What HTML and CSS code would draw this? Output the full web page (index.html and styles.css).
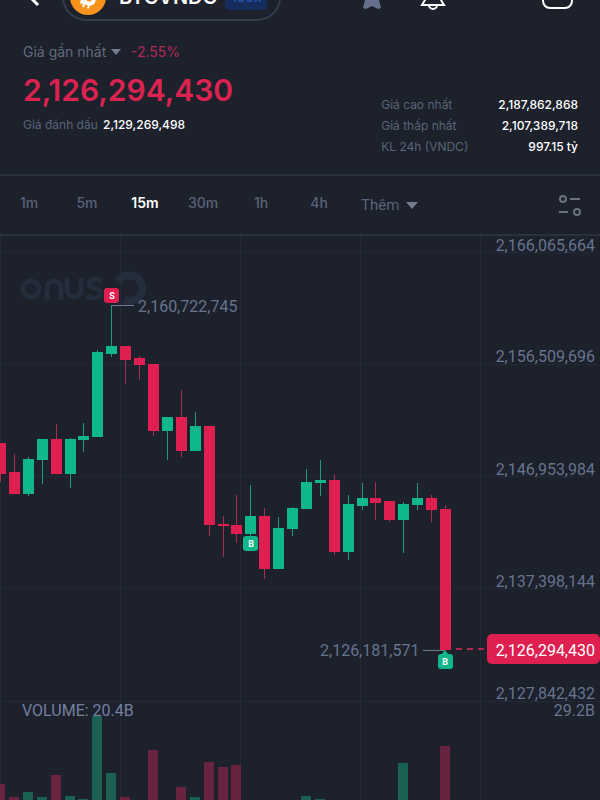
FILE: index.html
```html
<!DOCTYPE html>
<html lang="vi">

<head>
    <meta charset="UTF-8">
    <meta name="viewport" content="width=device-width, initial-scale=1.0">
    <title>BTCVNDC</title>
    <link rel="stylesheet" href="styles.css">
</head>

<body>
    <header class="topbar">
        <button class="icon-btn back" aria-label="Back">
            <svg width="24" height="24" viewBox="0 0 24 24"><path d="M14 0 L4 10 L14 20" fill="none" stroke="#fff" stroke-width="3"/></svg>
        </button>
        <button class="pair">
            <svg width="36" height="36" viewBox="0 0 36 36">
                <circle cx="18" cy="18" r="18" fill="#f7931a"/>
                <g transform="rotate(14 18 17)" fill="none" stroke="#fff" stroke-width="4">
                    <path d="M12 10 H20 a3 3 0 0 1 0 7 H16 M21 17 a3 3 0 0 1 0 7 H12 M16 10 V24"/>
                    <path d="M16 5 V9 M21 5 V9 M16 25 V29 M21 25 V29" stroke-width="2"/>
                </g>
            </svg>
            <span class="pair-name">BTCVNDC</span>
            <span class="leverage">100x</span>
        </button>
        <div class="actions">
            <button class="icon-btn" aria-label="Favourite">
                <svg width="20" height="24" viewBox="0 0 20 24"><path d="M2 2 H18 V14 L20 22 L17 23 L11 20 L5 23 L2 22 L4 14 Z" fill="#64708a"/></svg>
            </button>
            <button class="icon-btn" aria-label="Alerts">
                <svg width="28" height="28" viewBox="0 0 28 28" fill="none" stroke="#fff" stroke-width="2"><path d="M4 23 L7 18 V10 a8 8 0 0 1 16 0 V18 L26 23 Z"/><path d="M11 23 a4 4 0 0 0 8 0"/></svg>
            </button>
            <button class="icon-btn layout" aria-label="Layout">
                <svg width="32" height="32" viewBox="0 0 32 32"><rect x="1" y="2" width="29" height="28" rx="7" fill="none" stroke="#fff" stroke-width="2"/></svg>
            </button>
        </div>
    </header>

    <section class="summary">
        <div class="price-block">
            <div class="price-type">
                <select id="price-type" aria-label="Loại giá">
                    <option>Giá gần nhất</option>
                </select>
                <svg class="caret" width="10" height="6" viewBox="0 0 10 6"><path d="M0 0 H10 L5 6 Z"/></svg>
                <span class="change">-2.55%</span>
            </div>
            <div class="price">2,126,294,430</div>
            <div class="mark"><span class="label">Giá đánh dấu</span> <span>2,129,269,498</span></div>
        </div>
        <dl class="stats">
            <dt>Giá cao nhất</dt>
            <dd>2,187,862,868</dd>
            <dt>Giá thấp nhất</dt>
            <dd>2,107,389,718</dd>
            <dt>KL 24h (VNDC)</dt>
            <dd>997.15 tỷ</dd>
        </dl>
    </section>

    <nav class="intervals">
        <button>1m</button>
        <button>5m</button>
        <button class="active">15m</button>
        <button>30m</button>
        <button>1h</button>
        <button>4h</button>
        <div class="more">
            <select id="more" aria-label="Khung thời gian">
                <option>Thêm</option>
            </select>
            <svg class="caret" width="12" height="7" viewBox="0 0 12 7"><path d="M0 0 H12 L6 7 Z"/></svg>
        </div>
        <button class="settings" aria-label="Settings">
            <svg width="24" height="22" viewBox="0 0 24 22" fill="none" stroke="#6b7180" stroke-width="2">
                <circle cx="5" cy="5" r="3"/><path d="M12 5 H22 M1 18 H10"/><circle cx="19" cy="18" r="3"/>
            </svg>
        </button>
    </nav>

    <main>
        <svg class="chart" viewBox="0 236 600 564">
            <path class="grid" d="M0 252.5H600 M0 364.5H600 M0 476.5H600 M0 588.5H600 M0 701.5H600 M.5 236V800 M120.5 236V800 M240.5 236V800 M360.5 236V800 M480.5 236V800"/>
            <g class="watermark">
                <g fill="none" stroke-width="5">
                    <circle cx="31" cy="289" r="8"/>
                    <path d="M47 300 V288 a7 7 0 0 1 14 0 V300 M67 278 V290 a7 7 0 0 0 14 0 V278"/>
                    <path d="M102 281 C96 278 89 279 89 284 C89 290 101 287 101 293 C101 299 92 299 87 296"/>
                    <path d="M118 281 C124 273 137 273 141 283 C146 295 135 304 124 300" stroke-width="8"/>
                </g>
            </g>
            <g id="volumes"></g>
            <g id="candles"></g>
            <path class="pointer" d="M112 305.5 H134 M423 650.5 H445"/>
            <path class="last-line" d="M456 649 H486"/>
            <g class="axis-text">
                <text x="138" y="312">2,160,722,745</text>
                <text x="320" y="656">2,126,181,571</text>
                <text x="22" y="716" class="volume">VOLUME: 20.4B</text>
                <g text-anchor="end">
                    <text x="595" y="251">2,166,065,664</text>
                    <text x="595" y="362">2,156,509,696</text>
                    <text x="595" y="475">2,146,953,984</text>
                    <text x="595" y="587">2,137,398,144</text>
                    <text x="595" y="699">2,127,842,432</text>
                    <text x="595" y="716">29.2B</text>
                </g>
            </g>
            <rect class="down" x="487" y="634" width="113" height="30" rx="5"/>
            <text class="last-price" x="595" y="656" text-anchor="end">2,126,294,430</text>
            <g class="trade">
                <rect class="down" x="104" y="288" width="15" height="15" rx="3"/>
                <text x="112" y="299">S</text>
                <rect class="up" x="243" y="536" width="15" height="15" rx="3"/>
                <text x="251" y="547">B</text>
                <path class="up" d="M441 655 L445 650 L449 655 Z"/>
                <rect class="up" x="438" y="654" width="15" height="15" rx="3"/>
                <text x="445" y="665">B</text>
            </g>
        </svg>
    </main>

    <script src="chart.js"></script>
</body>

</html>
```
FILE: styles.css
```css
* {
    margin: 0;
    padding: 0;
    box-sizing: border-box;
}

body {
    background: #1c212c;
    color: #fff;
    font-family: Inter, sans-serif;
    font-size: 12px;
}

button,
select {
    background: none;
    border: none;
    color: inherit;
    font: inherit;
    cursor: pointer;
}

select {
    appearance: none;
}

svg {
    display: block;
}

/* the bar is scrolled partly under the top edge */
.topbar {
    display: flex;
    align-items: flex-end;
    height: 21px;
    padding: 0 24px;
    overflow: hidden;
}

.back {
    width: 38px;
    padding-bottom: 12px;
}

.pair {
    display: flex;
    align-items: center;
    gap: 13px;
    height: 48px;
    padding: 0 12px 0 6px;
    border: 2px solid #333a4b;
    border-radius: 24px;
}

.pair-name {
    font-size: 20px;
    font-weight: 600;
}

.leverage {
    margin-left: -5px;
    padding: 4px 6px;
    border-radius: 4px;
    background: #152c5c;
    color: #2352a4;
    font-size: 13px;
    line-height: 18px;
    font-weight: 600;
}

.actions {
    display: flex;
    align-items: flex-end;
    margin-left: auto;
    padding-bottom: 11px;
}

.actions .icon-btn {
    margin-right: 37px;
}

.actions .layout {
    margin: 0 2px 0 59px;
}

.summary {
    display: flex;
    justify-content: space-between;
    align-items: flex-end;
    height: 155px;
    padding: 0 22px 17px 23px;
    border-bottom: 2px solid #282e3c;
}

.price-block {
    padding-bottom: 24px;
}

.price-type {
    display: flex;
    align-items: center;
    color: #626a7b;
    font-size: 14px;
    line-height: 20px;
}

.caret {
    margin-left: 4px;
    fill: #747c8d;
}

.change {
    margin-left: 10px;
    color: #b32a58;
}

.price {
    margin: 8px 0 7px;
    color: #dc2350;
    font-size: 30px;
    line-height: 40px;
    font-weight: 600;
}

.mark {
    line-height: 16px;
    font-weight: 500;
}

.mark .label {
    margin-right: 2px;
    color: #596478;
    font-weight: 400;
}

.stats {
    display: grid;
    grid-template-columns: auto auto;
    column-gap: 30px;
    line-height: 21px;
}

.stats dt {
    color: #596478;
}

.stats dd {
    text-align: right;
    font-weight: 500;
}

.intervals {
    display: flex;
    align-items: center;
    height: 60px;
    padding-right: 18px;
    border-bottom: 2px solid #2a303e;
    color: #596377;
    font-size: 14px;
    font-weight: 500;
}

.intervals button {
    width: 58px;
    padding-bottom: 6px;
}

.intervals .active {
    color: #fff;
    font-weight: 600;
}

.more {
    display: flex;
    align-items: center;
    margin-left: 13px;
    font-family: Roboto, sans-serif;
    font-size: 15px;
    font-weight: 400;
}

.more .caret {
    margin-left: 6px;
}

.intervals .settings {
    width: auto;
    margin-left: auto;
    padding: 0;
}

.chart {
    width: 100%;
    height: auto;
    font-family: Roboto, sans-serif;
}

.grid {
    stroke: #232936;
}

.watermark {
    stroke: #232d3b;
}

.up {
    fill: #10b78a;
}

.down {
    fill: #df1f50;
}

.wick-up {
    stroke: #21997c;
}

.wick-down {
    stroke: #a92a53;
}

.volume-up {
    fill: #1a6153;
}

.volume-down {
    fill: #67233f;
}

.pointer {
    stroke: #6c7a91;
}

.last-line {
    stroke: #b32650;
    stroke-width: 2;
    stroke-dasharray: 6 5;
}

.axis-text {
    fill: #66748d;
    font-size: 16px;
}

.axis-text .volume {
    fill: #7380a0;
}

.last-price {
    fill: #fff;
    font-size: 16px;
}

.trade text {
    fill: #fff;
    font-size: 9px;
    font-weight: 700;
    text-anchor: middle;
}
```
FILE: chart.js
```javascript
// direction, high, body top, body bottom, low, volume top
const candles = [
    ['down', 443, 443, 474, 482, 784],
    ['down', 454, 472, 494, 494, 797],
    ['up', 457, 459, 494, 496, 792],
    ['up', 439, 439, 460, 484, 797],
    ['down', 424, 439, 474, 474, 775],
    ['up', 438, 439, 474, 488, 796],
    ['up', 423, 436, 440, 452, 799],
    ['up', 350, 352, 437, 437, 716],
    ['up', 305, 346, 354, 357, 773],
    ['down', 346, 346, 360, 384, 797],
    ['down', 356, 358, 365, 380, 800],
    ['down', 364, 364, 431, 436, 750],
    ['up', 417, 417, 431, 460, 800],
    ['down', 390, 417, 451, 457, 787],
    ['up', 412, 426, 451, 451, 797],
    ['down', 426, 426, 525, 536, 762],
    ['down', 516, 524, 526, 557, 767],
    ['down', 495, 525, 534, 543, 765],
    ['up', 485, 516, 534, 536, 800],
    ['down', 508, 516, 569, 579, 800],
    ['up', 517, 528, 569, 569, 800],
    ['up', 507, 508, 529, 536, 800],
    ['up', 469, 482, 509, 509, 796],
    ['up', 460, 480, 483, 496, 799],
    ['down', 474, 480, 552, 555, 800],
    ['up', 495, 504, 552, 560, 800],
    ['up', 483, 498, 506, 510, 800],
    ['down', 482, 498, 503, 520, 800],
    ['down', 501, 501, 520, 522, 800],
    ['up', 502, 504, 520, 553, 763],
    ['up', 483, 498, 505, 510, 800],
    ['down', 495, 498, 510, 522, 800],
    ['down', 505, 509, 650, 650, 746]
];
const step = 445 / 32;

function add(parent, tag, attrs) {
    const el = document.createElementNS('http://www.w3.org/2000/svg', tag);
    for (const name in attrs) {
        el.setAttribute(name, attrs[name]);
    }
    document.getElementById(parent).appendChild(el);
}

candles.forEach(([dir, high, top, bottom, low, volume], i) => {
    const x = Math.round(i * step);
    add('volumes', 'rect', { class: 'volume-' + dir, x: x - 5, y: volume, width: 10, height: 800 - volume });
    add('candles', 'line', { class: 'wick-' + dir, x1: x + 0.5, x2: x + 0.5, y1: high, y2: low });
    add('candles', 'rect', { class: dir, x: x - 5, y: top, width: 11, height: bottom - top });
});
```
